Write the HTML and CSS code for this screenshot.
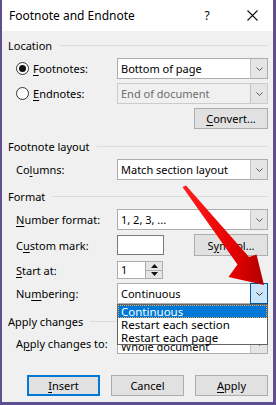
FILE: index.html
```html
<!DOCTYPE html>
<html>
<head>
	<meta charset="utf-8">
	<title>Footnote and Endnote</title>
	<link rel="stylesheet" href="styles.css">
</head>
<body>
	<div class="dialog">
		<!-- title bar -->
		<div class="titlebar">
			<span class="title">Footnote and Endnote</span>
			<span class="help">?</span>
			<span class="close">
				<svg width="11" height="11" viewBox="0 0 11 11"><path d="M0.5 0.5 L10.5 10.5 M10.5 0.5 L0.5 10.5" stroke="#111" stroke-width="1.1" fill="none"/></svg>
			</span>
		</div>

		<div class="body">
			<div class="group-head gh-location"><span>Location</span><i></i></div>

			<div class="row r-foot">
				<label class="radio-label"><span class="radio checked"></span><span><u>F</u>ootnotes:</span></label>
				<div class="combo"><span class="val">Bottom of page</span><span class="drop"><svg width="7" height="4" viewBox="0 0 7 4"><path d="M0.5 0.5 L3.5 3.5 L6.5 0.5" stroke="#555" fill="none"/></svg></span></div>
			</div>
			<div class="row r-end">
				<label class="radio-label"><span class="radio"></span><span><u>E</u>ndnotes:</span></label>
				<div class="combo disabled"><span class="val">End of document</span><span class="drop"><svg width="7" height="4" viewBox="0 0 7 4"><path d="M0.5 0.5 L3.5 3.5 L6.5 0.5" stroke="#555" fill="none"/></svg></span></div>
			</div>
			<div class="row-right r-convert">
				<button class="btn wide"><u>C</u>onvert...</button>
			</div>

			<div class="group-head gh-layout"><span>Footnote layout</span><i></i></div>
			<div class="row r-cols">
				<label>Co<u>l</u>umns:</label>
				<div class="combo"><span class="val">Match section layout</span><span class="drop"><svg width="7" height="4" viewBox="0 0 7 4"><path d="M0.5 0.5 L3.5 3.5 L6.5 0.5" stroke="#555" fill="none"/></svg></span></div>
			</div>

			<div class="group-head gh-format"><span>Format</span><i></i></div>
			<div class="row r-numfmt">
				<label><u>N</u>umber format:</label>
				<div class="combo"><span class="val">1, 2, 3, ...</span><span class="drop"><svg width="7" height="4" viewBox="0 0 7 4"><path d="M0.5 0.5 L3.5 3.5 L6.5 0.5" stroke="#555" fill="none"/></svg></span></div>
			</div>
			<div class="row r-custom">
				<label>C<u>u</u>stom mark:</label>
				<div class="custom-wrap">
					<span class="textbox"></span>
					<button class="btn wide">S<u>y</u>mbol...</button>
				</div>
			</div>
			<div class="row r-start">
				<label><u>S</u>tart at:</label>
				<div class="spinner">
					<span class="spin-val">1</span>
					<span class="spin-btns">
						<span class="spin-b"><svg width="7" height="4" viewBox="0 0 7 4"><path d="M0 4 L3.5 0 L7 4 Z" fill="#111"/></svg></span>
						<span class="spin-b"><svg width="7" height="4" viewBox="0 0 7 4"><path d="M0 0 L3.5 4 L7 0 Z" fill="#111"/></svg></span>
					</span>
				</div>
			</div>
			<div class="row r-numbering">
				<label>Nu<u>m</u>bering:</label>
				<div class="combo open"><span class="val">Continuous</span><span class="drop"><svg width="7" height="4" viewBox="0 0 7 4"><path d="M0.5 0.5 L3.5 3.5 L6.5 0.5" stroke="#333" fill="none"/></svg></span></div>
			</div>

			<div class="group-head gh-apply"><span>Apply changes</span><i></i></div>
			<div class="row r-applyto">
				<label>A<u>p</u>ply changes to:</label>
				<div class="combo"><span class="val hidden-under">Whole document</span><span class="drop"><svg width="7" height="4" viewBox="0 0 7 4"><path d="M0.5 0.5 L3.5 3.5 L6.5 0.5" stroke="#555" fill="none"/></svg></span></div>
			</div>

			<div class="buttons">
				<button class="btn default"><u>I</u>nsert</button>
				<button class="btn">Cancel</button>
				<button class="btn"><u>A</u>pply</button>
			</div>
		</div>

		<!-- open list of the Numbering combo -->
		<ul class="droplist">
			<li class="sel">Continuous</li>
			<li>Restart each section</li>
			<li>Restart each page</li>
		</ul>

		<!-- red pointer drawn over the dialog -->
		<svg class="arrow" width="276" height="405" viewBox="0 0 276 405">
			<defs>
				<linearGradient id="red" x1="0" y1="0" x2="1" y2="0">
					<stop offset="0" stop-color="#ff2020"/>
					<stop offset="0.6" stop-color="#e80000"/>
					<stop offset="1" stop-color="#b00000"/>
				</linearGradient>
			</defs>
			<path d="M182.5 187 L186 185.5 L249 257 L256.5 254.5 L264 285 L228.5 277 L237.5 264.5 Z" fill="url(#red)"/>
		</svg>
	</div>
</body>
</html>
```

FILE: styles.css
```css
body {
	margin: 0;
	font-family: "Noto Sans", "DejaVu Sans", sans-serif;
	font-size: 11px;
	color: #000;
}
u {
	text-decoration-thickness: 1px;
	text-underline-offset: 2px;
}
.dialog {
	position: relative;
	width: 276px;
	height: 405px;
	box-sizing: border-box;
	background: #f0f0f0;
	border-left: 2px solid #5f4f90;
	border-right: 3px solid #5f4f90;
	border-bottom: 3px solid #5f4f90;
	overflow: hidden;
}
.titlebar {
	height: 31px;
	background: #fff;
	display: flex;
	align-items: center;
	font-size: 12px;
}
.title {
	flex: 1;
	padding-left: 7px;
}
.help {
	width: 16px;
	text-align: center;
	margin-right: 29px;
}
.close {
	width: 16px;
	display: flex;
	justify-content: center;
	margin-right: 13px;
}

.body {
	display: flex;
	flex-direction: column;
	padding: 0 5px 0 6px;
}
.group-head {
	height: 14px;
	display: flex;
	align-items: center;
}
.group-head i {
	flex: 1;
	height: 1px;
	background: #dcdcdc;
	margin-left: 7px;
}
.gh-location { margin-top: 7px; }
.gh-layout { margin-top: 10px; }
.gh-format { margin-top: 9px; }
.gh-apply { margin-top: 10px; }

.row {
	display: grid;
	grid-template-columns: 101px 1fr;
	align-items: center;
	height: 21px;
	padding-left: 8px;
}
.row label {
	display: flex;
	align-items: center;
	white-space: nowrap;
}
.r-foot { margin-top: 6px; }
.r-end { margin-top: 4px; }
.r-cols { margin-top: 6px; }
.r-numfmt { margin-top: 6px; }
.r-custom { margin-top: 4px; height: 22px; }
.r-start { margin-top: 5px; height: 18px; }
.r-numbering { margin-top: 4px; }
.r-applyto { margin-top: 5px; }

.row-right {
	display: flex;
	justify-content: flex-end;
	margin-top: 4px;
	height: 21px;
}

.radio-label .radio {
	width: 11px;
	height: 11px;
	border: 1px solid #333;
	border-radius: 50%;
	background: #fff;
	margin-right: 4px;
	display: flex;
	align-items: center;
	justify-content: center;
}
.radio.checked::after {
	content: "";
	width: 7px;
	height: 7px;
	border-radius: 50%;
	background: #111;
}

.combo {
	height: 21px;
	box-sizing: border-box;
	border: 1px solid #adadad;
	background: #fff;
	display: flex;
}
.combo .val {
	flex: 1;
	padding-left: 3px;
	line-height: 19px;
	white-space: nowrap;
	overflow: hidden;
}
.combo .drop {
	width: 16px;
	background: #e5e5e5;
	border-left: 1px solid #c4c4c4;
	display: flex;
	align-items: center;
	justify-content: center;
}
.combo.disabled {
	background: #f0f0f0;
	border-color: #cccccc;
	color: #6d6d6d;
}
.combo.open .drop {
	background: #cce4f7;
	border: 1px solid #005499;
	margin: -1px -1px -1px 0;
	width: 16px;
}
/* the open list covers the upper half of this value */
.combo .val.hidden-under {
	line-height: 25px;
	height: 19px;
}

.btn {
	font: inherit;
	color: #000;
	background: #e1e1e1;
	border: 1px solid #adadad;
	height: 21px;
	padding: 0;
	width: 73px;
	box-sizing: border-box;
}
.btn.wide {
	width: 74px;
}
.btn.default {
	border: 2px solid #0078d7;
}

.custom-wrap {
	display: flex;
	justify-content: space-between;
	align-items: flex-start;
	height: 22px;
}
.custom-wrap .textbox {
	width: 47px;
	height: 20px;
	box-sizing: border-box;
	border: 1px solid #7a7a7a;
	background: #fff;
	margin-top: 1px;
}
.custom-wrap .btn {
	height: 22px;
}

.spinner {
	width: 46px;
	height: 18px;
	box-sizing: border-box;
	border: 1px solid #adadad;
	background: #fff;
	display: flex;
}
.spin-val {
	flex: 1;
	padding-left: 3px;
	line-height: 16px;
}
.spin-btns {
	width: 16px;
	display: flex;
	flex-direction: column;
	border-left: 1px solid #adadad;
}
.spin-b {
	flex: 1;
	background: #e5e5e5;
	display: flex;
	align-items: center;
	justify-content: center;
}
.spin-b + .spin-b {
	border-top: 1px solid #adadad;
}

.buttons {
	display: flex;
	justify-content: flex-end;
	gap: 11px;
	margin-top: 21px;
}

/* numbering list, shown open over the dialog */
.droplist {
	position: absolute;
	top: 304px;
	left: 115px;
	width: 151px;
	margin: 0;
	padding: 0;
	list-style: none;
	background: #fff;
	border: 1px solid #646464;
	box-sizing: border-box;
	font-size: 11.5px;
}
.droplist li {
	height: 13px;
	line-height: 13px;
	padding-left: 3px;
	white-space: nowrap;
}
.droplist li.sel {
	background: #0078d7;
	color: #fff;
	outline: 1px dotted #f3a847;
	outline-offset: -1px;
}

.arrow {
	position: absolute;
	top: 0;
	left: -2px;
	pointer-events: none;
}
```
